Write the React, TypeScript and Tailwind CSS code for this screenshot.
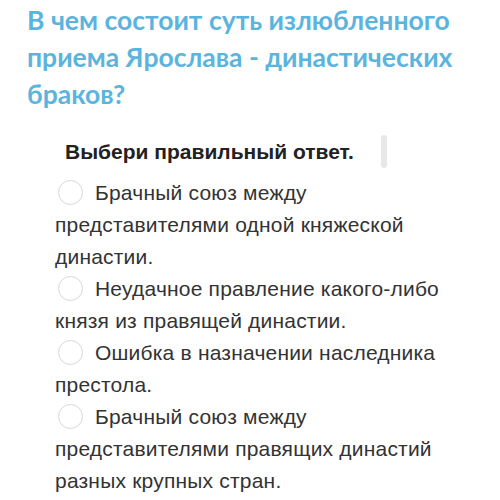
import React from "react";

const options: string[][] = [
  ["Брачный союз между", "представителями одной княжеской", "династии."],
  ["Неудачное правление какого-либо", "князя из правящей династии."],
  ["Ошибка в назначении наследника", "престола."],
  ["Брачный союз между", "представителями правящих династий", "разных крупных стран."],
];

export default function App() {
  return (
    <div className="w-[500px] h-[500px] bg-white overflow-hidden relative">
      <h1
        className="pl-[27px] pt-[2px] text-[26.5px] leading-[37px] font-bold text-[#5bb4dd]"
        style={{ fontFamily: "Lato, 'Noto Sans', sans-serif" }}
      >
        В чем состоит суть излюбленного
        <br />
        приема Ярослава - династических
        <br />
        браков?
      </h1>
      <div className="absolute left-[381px] top-[135px] w-[6px] h-[33px] rounded-full bg-[#e8e8e8]" />
      <div
        className="pl-[55px] mt-[27px]"
        style={{ fontFamily: "'Liberation Sans', Arial, sans-serif" }}
      >
        <div className="pl-[10px] text-[21px] font-bold text-[#222] leading-[24px]">
          Выбери правильный ответ.
        </div>
        <div className="mt-[13px] text-[21px] leading-[32px] tracking-[0.2px] text-[#333]">
          {options.map((o, i) => (
            <p key={i}>
              <span className="inline-block w-[25px] h-[25px] rounded-full border-[1.5px] border-[#d8d8d8] align-[-5px] ml-[3px] mr-[12px]" />
              {o.map((line, j) => (
                <React.Fragment key={j}>
                  {j > 0 && <br />}
                  {line}
                </React.Fragment>
              ))}
            </p>
          ))}
        </div>
      </div>
    </div>
  );
}
